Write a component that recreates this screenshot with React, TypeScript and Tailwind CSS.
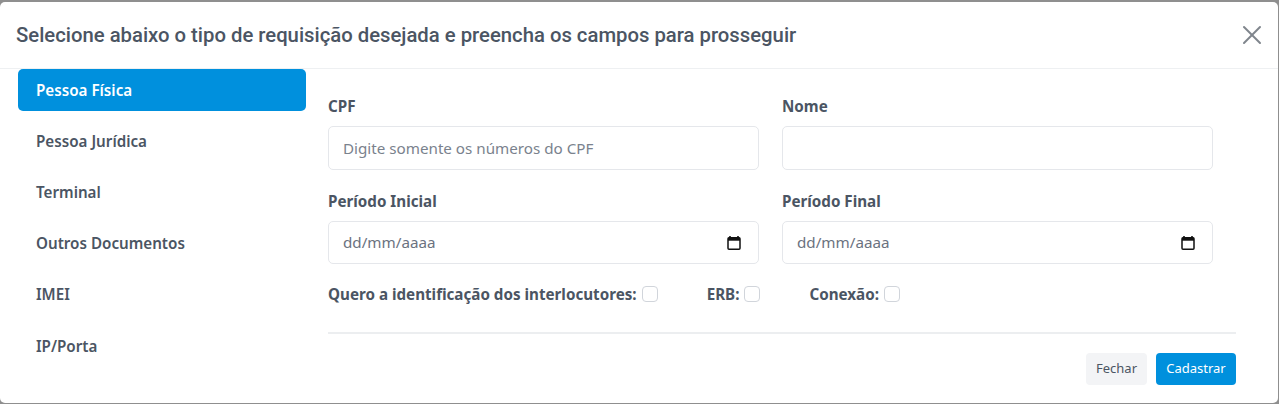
import { X } from "lucide-react";

const tabs = ["Pessoa Física", "Pessoa Jurídica", "Terminal", "Outros Documentos", "IMEI", "IP/Porta"];

const labelFont = "font-['Noto_Sans',sans-serif]";

function Label({ children }: { children: React.ReactNode }) {
  return <label className={`block h-[20px] text-[15.2px] leading-[20px] font-bold text-[#4b5563] ${labelFont}`}>{children}</label>;
}

function TextField({ label, placeholder }: { label: string; placeholder?: string }) {
  return (
    <div className="w-[431px]">
      <Label>{label}</Label>
      <input
        type="text"
        placeholder={placeholder}
        className={`mt-[10px] block h-[44px] w-full rounded-[5px] border border-[#e5e7eb] bg-white px-[14px] text-[15.2px] text-[#4b5563] placeholder:text-[#7a828d] focus:outline-none ${labelFont}`}
      />
    </div>
  );
}

function DateField({ label }: { label: string }) {
  return (
    <div className="w-[431px]">
      <Label>{label}</Label>
      <div className={`mt-[10px] flex h-[43px] items-center justify-between rounded-[5px] border border-[#e5e7eb] bg-white pr-[16px] pl-[14px] text-[15.2px] text-[#6b7280] ${labelFont}`}>
        <span>dd/mm/aaaa</span>
        <svg width="16" height="16" viewBox="0 0 16 16" fill="none">
          <path d="M4 1v2M12 1v2" stroke="#111" strokeWidth="1.6" />
          <rect x="2" y="2.7" width="12" height="11.5" rx="1" stroke="#111" strokeWidth="1.5" />
          <rect x="2" y="2.7" width="12" height="3" fill="#111" />
        </svg>
      </div>
    </div>
  );
}

function Check({ label, className }: { label: string; className: string }) {
  return (
    <div className={`flex items-center gap-[5px] ${className}`}>
      <span className={`text-[15.2px] leading-[20px] font-bold whitespace-nowrap text-[#4b5563] ${labelFont}`}>{label}</span>
      <input type="checkbox" className="h-[16px] w-[16px] appearance-none rounded-[4px] border border-[#d1d5db] bg-white" />
    </div>
  );
}

export default function App() {
  return (
    <div className="h-[404px] w-[1279px] overflow-hidden bg-[#8f8f8f] pt-[2px]">
      <div className="h-[401px] w-[1278px] rounded-[5px] bg-white">
        <div className="flex h-[67px] items-center justify-between border-b border-[#eef0f2] pr-[10px] pl-[16px]">
          <h1 className="font-['Roboto',sans-serif] text-[20.3px] font-medium text-[#4b5563]">
            Selecione abaixo o tipo de requisição desejada e preencha os campos para prosseguir
          </h1>
          <X className="h-[32px] w-[32px] text-[#7f858c]" strokeWidth={1.5} />
        </div>
        <div className="flex pl-[18px]">
          <nav className="flex w-[288px] flex-col">
            {tabs.map((t, i) => (
              <div
                key={t}
                className={`flex h-[42px] items-center rounded-[5px] px-[18px] text-[15.2px] font-semibold ${labelFont} ${i === 0 ? "bg-[#0090dd] text-white" : "mt-[9.2px] text-[#4b5563]"}`}
              >
                {t}
              </div>
            ))}
          </nav>
          <div className="ml-[22px] w-[908px] pt-[27px]">
            <div className="flex gap-[23px]">
              <TextField label="CPF" placeholder="Digite somente os números do CPF" />
              <TextField label="Nome" />
            </div>
            <div className="mt-[21px] flex gap-[23px]">
              <DateField label="Período Inicial" />
              <DateField label="Período Final" />
            </div>
            <div className="mt-[20px] flex items-center">
              <Check label="Quero a identificação dos interlocutores:" className="" />
              <Check label="ERB:" className="ml-[49px]" />
              <Check label="Conexão:" className="ml-[49px]" />
            </div>
            <div className="mt-[28px] border-t-2 border-[#eceef0]" />
            <div className="mt-[19px] flex justify-end gap-[9px]">
              <button className={`h-[32px] w-[61px] rounded-[4px] bg-[#f3f4f6] text-[13px] text-[#4b5563] ${labelFont}`}>Fechar</button>
              <button className={`h-[32px] w-[80px] rounded-[4px] bg-[#0090dd] text-[13px] text-white ${labelFont}`}>Cadastrar</button>
            </div>
          </div>
        </div>
      </div>
    </div>
  );
}
